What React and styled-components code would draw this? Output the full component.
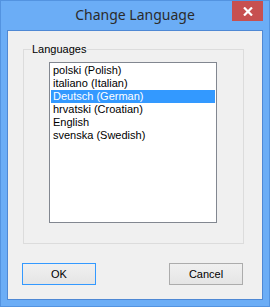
import React, { useState } from "react";
import styled, { createGlobalStyle } from "styled-components";

const GlobalStyle = createGlobalStyle`
  html, body {
    margin: 0;
    padding: 0;
    background: #ffffff;
  }
  * {
    box-sizing: border-box;
  }
`;

const Window = styled.div`
  width: 270px;
  height: 307px;
  border: 1px solid #5393e0;
  background: #6badf6;
  display: flex;
  flex-direction: column;
  font-family: "Liberation Sans", Arial, sans-serif;
  font-size: 11px;
  color: #000;
`;

const TitleBar = styled.div`
  position: relative;
  height: 29px;
  flex: none;
  display: flex;
  justify-content: center;
  padding-top: 4px;
`;

const Title = styled.div`
  font-family: "Noto Sans", "Open Sans", sans-serif;
  font-size: 14px;
  line-height: 20px;
  color: #2b2b2b;
`;

const CloseButton = styled.button`
  position: absolute;
  top: 0;
  right: 6px;
  width: 31px;
  height: 20px;
  border: none;
  padding: 0;
  background: #c75050;
  display: flex;
  align-items: center;
  justify-content: center;
  cursor: pointer;
`;

const Client = styled.div`
  flex: 1;
  margin: 0 6px 6px;
  border: 1px solid #4f88d4;
  background: #f0f0f0;
  display: flex;
  flex-direction: column;
`;

const GroupBox = styled.div`
  position: relative;
  width: 221px;
  height: 195px;
  margin: 18px 0 0 15px;
  border: 1px solid #dcdcdc;
  padding: 12px 0 0 25px;
`;

const GroupLabel = styled.span`
  position: absolute;
  top: -7px;
  left: 7px;
  padding: 0 1px;
  line-height: 13px;
  background: #f0f0f0;
`;

const ListBox = styled.ul`
  list-style: none;
  margin: 0;
  width: 168px;
  height: 161px;
  border: 1px solid #828790;
  background: #ffffff;
  padding: 1px;
  overflow: hidden;
`;

const ListItem = styled.li`
  height: 13px;
  line-height: 13px;
  padding-left: 2px;
  white-space: nowrap;
  background: ${(p) => (p.$selected ? "#3399ff" : "transparent")};
  color: ${(p) => (p.$selected ? "#ffffff" : "#000000")};
  cursor: default;
`;

const ButtonRow = styled.div`
  display: flex;
  justify-content: space-between;
  margin: 19px 19px 0 14px;
`;

const Button = styled.button`
  width: 74px;
  height: 22px;
  padding: 0;
  border: 1px solid ${(p) => (p.$default ? "#3399ff" : "#acacac")};
  background: linear-gradient(#f0f0f0, #e5e5e5);
  font-family: "Liberation Sans", Arial, sans-serif;
  font-size: 11px;
  color: #000;
  cursor: pointer;
`;

const languages = [
  "polski (Polish)",
  "italiano (Italian)",
  "Deutsch (German)",
  "hrvatski (Croatian)",
  "English",
  "svenska (Swedish)",
];

const App = () => {
  const [selected, setSelected] = useState(2);
  return (
    <>
      <GlobalStyle />
      <Window>
        <TitleBar>
          <Title>Change Language</Title>
          <CloseButton aria-label="Close">
            <svg width="10" height="9" viewBox="0 0 10 9">
              <path
                d="M1 0.5 L9 8.5 M9 0.5 L1 8.5"
                stroke="#ffffff"
                strokeWidth="2.2"
              />
            </svg>
          </CloseButton>
        </TitleBar>
        <Client>
          <GroupBox>
            <GroupLabel>Languages</GroupLabel>
            <ListBox>
              {languages.map((lang, i) => (
                <ListItem
                  key={lang}
                  $selected={i === selected}
                  onClick={() => setSelected(i)}
                >
                  {lang}
                </ListItem>
              ))}
            </ListBox>
          </GroupBox>
          <ButtonRow>
            <Button $default>OK</Button>
            <Button>Cancel</Button>
          </ButtonRow>
        </Client>
      </Window>
    </>
  );
};

export default App;
